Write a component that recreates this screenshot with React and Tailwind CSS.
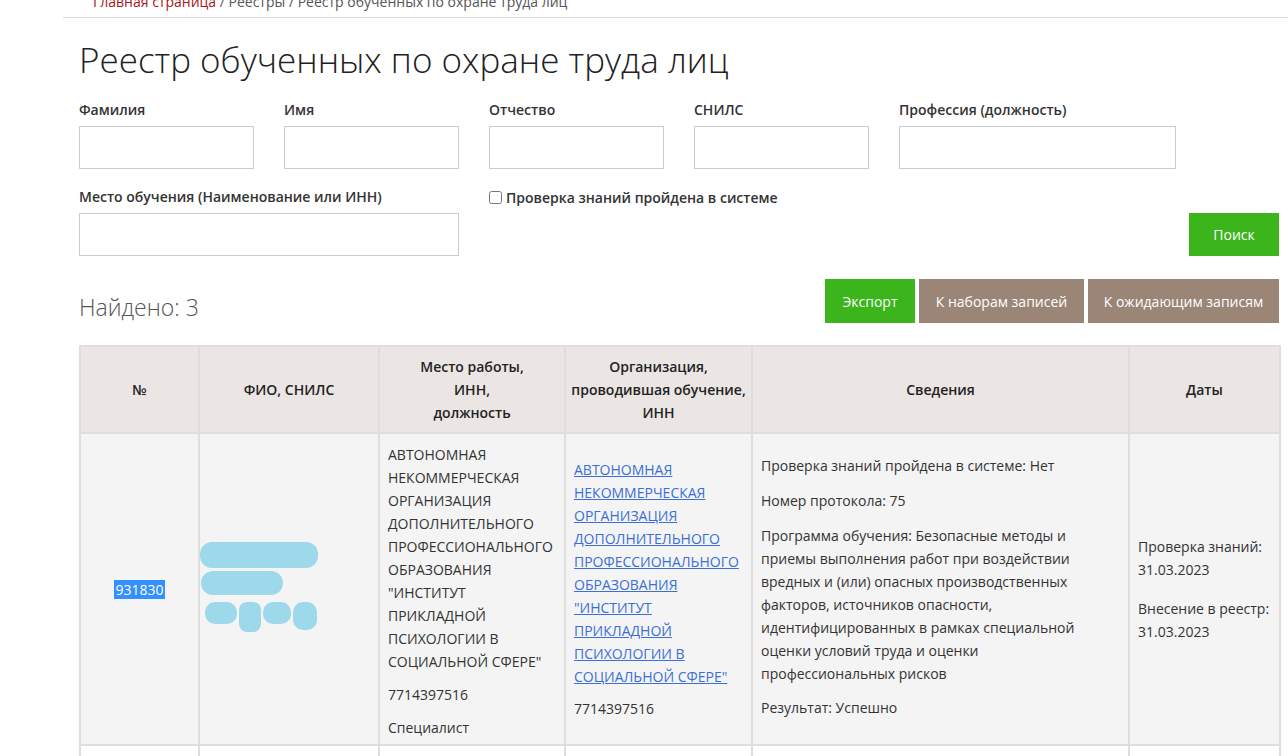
const font = { fontFamily: '"Open Sans", "Liberation Sans", sans-serif' };

const Field = ({ label, w }) => (
    <div className="flex flex-col">
        <label className="h-[26px] text-[14px] font-semibold text-[#333] leading-[26px] -mt-[3px] mb-[3px]">
            {label}
        </label>
        <input className={`${w} h-[43px] border border-[#cccccc] bg-white outline-none`} />
    </div>
);

const Lines = ({ items, className }) => (
    <div className={className}>
        {items.map((t, i) => (
            <div key={i}>{t}</div>
        ))}
    </div>
);

const org = [
    "АВТОНОМНАЯ",
    "НЕКОММЕРЧЕСКАЯ",
    "ОРГАНИЗАЦИЯ",
    "ДОПОЛНИТЕЛЬНОГО",
    "ПРОФЕССИОНАЛЬНОГО",
    "ОБРАЗОВАНИЯ",
    "\"ИНСТИТУТ",
    "ПРИКЛАДНОЙ",
    "ПСИХОЛОГИИ В",
    "СОЦИАЛЬНОЙ СФЕРЕ\"",
];

const App = () => {
    return (
        <div className="w-[1288px] h-[756px] overflow-hidden bg-white text-[#333]" style={font}>
            <div className="ml-[63px] border-b border-[#d9d9d9] h-[18px] relative">
                <div className="absolute left-[30px] -top-[8px] text-[14px] leading-[20px] text-[#555]">
                    <span className="text-[#a4161a]">Главная страница</span> / Реестры / Реестр обученных по охране труда лиц
                </div>
            </div>
            <div className="ml-[79px] w-[1200px]">
                <h1 className="mt-[20px] h-[44px] text-[35px] font-light leading-[44px] text-[#222]">
                    Реестр обученных по охране труда лиц
                </h1>
                <div className="mt-[18px] flex gap-[30px]">
                    <Field label="Фамилия" w="w-[175px]" />
                    <Field label="Имя" w="w-[175px]" />
                    <Field label="Отчество" w="w-[175px]" />
                    <Field label="СНИЛС" w="w-[175px]" />
                    <Field label="Профессия (должность)" w="w-[277px]" />
                </div>
                <div className="mt-[18px] flex">
                    <Field label="Место обучения (Наименование или ИНН)" w="w-[380px]" />
                    <div className="ml-[30px] -mt-[3px] h-[26px] flex items-center gap-[4px] text-[14px] font-semibold text-[#333]">
                        <input type="checkbox" className="w-[13px] h-[13px]" />
                        <span>Проверка знаний пройдена в системе</span>
                    </div>
                    <div className="ml-auto flex items-end">
                        <button className="w-[90px] h-[43px] bg-[#3cb41c] text-white text-[14px]">Поиск</button>
                    </div>
                </div>
                <div className="mt-[23px] flex items-center h-[44px]">
                    <div className="text-[23px] font-light text-[#555] mt-[12px]">Найдено: 3</div>
                    <div className="ml-auto flex gap-[4px]">
                        <button className="w-[90px] h-[44px] bg-[#3cb41c] text-white text-[14px]">Экспорт</button>
                        <button className="w-[165px] h-[44px] bg-[#9b8577] text-white text-[14px]">К наборам записей</button>
                        <button className="w-[191px] h-[44px] bg-[#9b8577] text-white text-[14px]">К ожидающим записям</button>
                    </div>
                </div>
                <table className="mt-[22px] w-[1200px] border-collapse text-[14px] leading-[23px] table-fixed">
                    <colgroup>
                        <col className="w-[119px]" />
                        <col className="w-[180px]" />
                        <col className="w-[186px]" />
                        <col className="w-[187px]" />
                        <col className="w-[377px]" />
                        <col className="w-[151px]" />
                    </colgroup>
                    <thead>
                        <tr className="bg-[#ebe6e4] h-[87px] font-semibold text-[#222]">
                            <th className="border-2 border-[#dedede] font-semibold">№</th>
                            <th className="border-2 border-[#dedede] font-semibold">ФИО, СНИЛС</th>
                            <th className="border-2 border-[#dedede] font-semibold">
                                Место работы,<br />ИНН,<br />должность
                            </th>
                            <th className="border-2 border-[#dedede] font-semibold">
                                Организация,<br />проводившая обучение,<br />ИНН
                            </th>
                            <th className="border-2 border-[#dedede] font-semibold">Сведения</th>
                            <th className="border-2 border-[#dedede] font-semibold">Даты</th>
                        </tr>
                    </thead>
                    <tbody>
                        <tr className="bg-[#f4f4f4] h-[312px] align-middle">
                            <td className="border-2 border-[#dedede] text-center">
                                <span className="bg-[#3390ff] text-white px-[1px]">931830</span>
                            </td>
                            <td className="border-2 border-[#dedede]">
                                <div className="flex flex-col gap-[3px] -mt-[4px]">
                                    <div className="w-[118px] h-[26px] rounded-[12px] bg-[#9dd9ea]" />
                                    <div className="w-[82px] h-[24px] rounded-[12px] bg-[#9dd9ea] ml-[1px]" />
                                    <div className="flex gap-[2px] ml-[5px] mt-[4px]">
                                        <div className="w-[32px] h-[22px] rounded-[10px] bg-[#9dd9ea]" />
                                        <div className="w-[22px] h-[30px] rounded-[8px] bg-[#9dd9ea]" />
                                        <div className="w-[28px] h-[22px] rounded-[10px] bg-[#9dd9ea]" />
                                        <div className="w-[24px] h-[28px] rounded-[10px] bg-[#9dd9ea]" />
                                    </div>
                                </div>
                            </td>
                            <td className="border-2 border-[#dedede] px-[8px] align-top pt-[9px]">
                                <Lines items={org} />
                                <div className="mt-[10px]">7714397516</div>
                                <div className="mt-[10px]">Специалист</div>
                            </td>
                            <td className="border-2 border-[#dedede] px-[8px] align-top pt-[24px]">
                                <Lines items={org} className="text-[#3a6fd8] underline" />
                                <div className="mt-[9px]">7714397516</div>
                            </td>
                            <td className="border-2 border-[#dedede] pl-[8px] pr-[20px]">
                                <div className="-mt-[6px]">Проверка знаний пройдена в системе: Нет</div>
                                <div className="mt-[12px]">Номер протокола: 75</div>
                                <div className="mt-[12px]">
                                    Программа обучения: Безопасные методы и приемы выполнения работ при воздействии
                                    вредных и (или) опасных производственных факторов, источников опасности,
                                    идентифицированных в рамках специальной оценки условий труда и оценки
                                    профессиональных рисков
                                </div>
                                <div className="mt-[11px]">Результат: Успешно</div>
                            </td>
                            <td className="border-2 border-[#dedede] px-[8px]">
                                <div>Проверка знаний:<br />31.03.2023</div>
                                <div className="mt-[16px]">Внесение в реестр:<br />31.03.2023</div>
                            </td>
                        </tr>
                        <tr className="bg-white h-[40px]">
                            <td className="border-2 border-[#dedede]" />
                            <td className="border-2 border-[#dedede]" />
                            <td className="border-2 border-[#dedede]" />
                            <td className="border-2 border-[#dedede]" />
                            <td className="border-2 border-[#dedede]" />
                            <td className="border-2 border-[#dedede]" />
                        </tr>
                    </tbody>
                </table>
            </div>
        </div>
    );
};

export default App;
